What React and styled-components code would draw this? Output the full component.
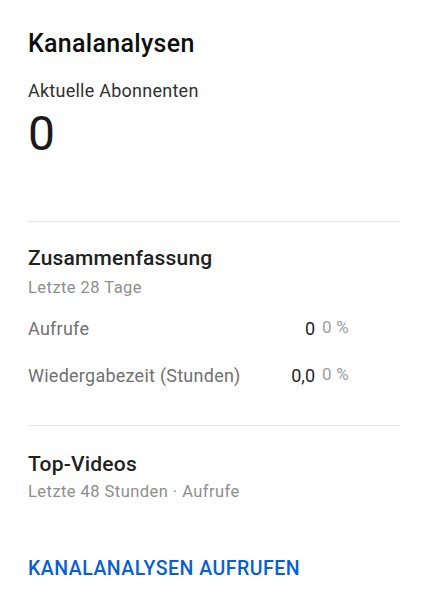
import React from 'react'
import styled, { createGlobalStyle } from 'styled-components'

const GlobalStyle = createGlobalStyle`
  html, body {
    margin: 0;
    padding: 0;
    background: #ffffff;
  }
  body {
    font-family: Roboto, "Liberation Sans", Arial, sans-serif;
    -webkit-font-smoothing: antialiased;
  }
`

const Page = styled.main`
  display: flex;
  flex-direction: column;
  padding: 28px 33px 0 28px;
`

const Title = styled.h1`
  margin: 0;
  font-size: 25px;
  line-height: 32px;
  font-weight: 500;
  letter-spacing: 0.3px;
  color: #0f0f0f;
`

const Label = styled.div`
  margin-top: 19px;
  font-size: 18px;
  line-height: 24px;
  letter-spacing: 0.25px;
  color: #303030;
`

const BigNumber = styled.div`
  margin-top: 3px;
  font-size: 48px;
  line-height: 56px;
  font-weight: 400;
  color: #1a1a1a;
`

const Divider = styled.hr`
  margin: ${p => p.$top}px 0 0;
  border: 0;
  height: 1px;
  background: #e5e5e5;
`

const SectionTitle = styled.h2`
  margin: ${p => p.$top}px 0 0;
  font-size: 21px;
  line-height: 28px;
  font-weight: 500;
  letter-spacing: 0.2px;
  color: #212121;
`

const SubTitle = styled.div`
  margin-top: ${p => p.$top}px;
  font-size: 16.5px;
  line-height: 22px;
  letter-spacing: 0.45px;
  color: #8e8e8e;
`

const StatRow = styled.div`
  display: grid;
  grid-template-columns: 1fr auto 77px;
  column-gap: 7px;
  align-items: start;
  margin-top: ${p => p.$top}px;
`

const StatName = styled.span`
  font-size: 18px;
  line-height: 24px;
  letter-spacing: 0.25px;
  color: #707070;
`

const StatValue = styled.span`
  font-size: 18px;
  line-height: 24px;
  color: #1f1f1f;
  text-align: right;
`

const StatChange = styled.span`
  font-size: 17px;
  line-height: 20px;
  letter-spacing: 0.2px;
  color: #9e9e9e;
`

const Link = styled.a`
  margin-top: 54px;
  font-size: 19.5px;
  line-height: 24px;
  font-weight: 500;
  letter-spacing: 0.5px;
  color: #065fd4;
  text-decoration: none;
  cursor: pointer;
`

const stats = [
  { name: 'Aufrufe', value: '0', change: '0 %', top: 18 },
  { name: 'Wiedergabezeit (Stunden)', value: '0,0', change: '0 %', top: 23 },
]

export default function App() {
  return (
    <>
      <GlobalStyle />
      <Page>
        <Title>Kanalanalysen</Title>
        <Label>Aktuelle Abonnenten</Label>
        <BigNumber>0</BigNumber>

        <Divider $top={59} />

        <SectionTitle $top={22}>Zusammenfassung</SectionTitle>
        <SubTitle $top={5}>Letzte 28 Tage</SubTitle>
        {stats.map(s => (
          <StatRow key={s.name} $top={s.top}>
            <StatName>{s.name}</StatName>
            <StatValue>{s.value}</StatValue>
            <StatChange>{s.change}</StatChange>
          </StatRow>
        ))}

        <Divider $top={37} />

        <SectionTitle $top={24}>Top-Videos</SectionTitle>
        <SubTitle $top={3}>Letzte 48 Stunden · Aufrufe</SubTitle>

        <Link>KANALANALYSEN AUFRUFEN</Link>
      </Page>
    </>
  )
}
